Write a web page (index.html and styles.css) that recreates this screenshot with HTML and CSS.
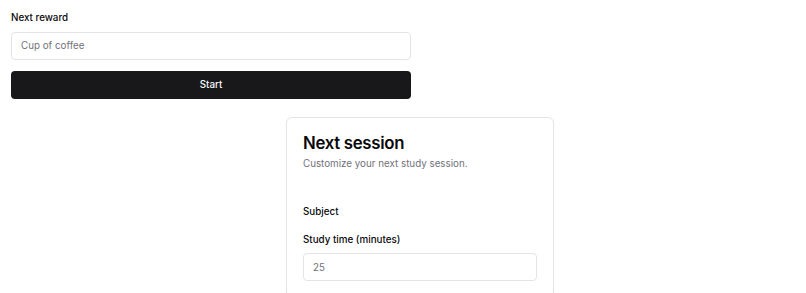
FILE: index.html
```html
<!DOCTYPE html>
<html lang="en">
<head>
  <meta charset="UTF-8">
  <title>Study rewards</title>
  <link rel="stylesheet" href="styles.css">
</head>
<body>
  <main class="page">
    <form class="reward-form">
      <label class="label" for="reward">Next reward</label>
      <input class="input" id="reward" type="text" placeholder="Cup of coffee">
      <button class="button" type="button">Start</button>
    </form>

    <section class="card">
      <div class="card-header">
        <h1 class="card-title">Next session</h1>
        <p class="card-description">Customize your next study session.</p>
      </div>
      <div class="card-content">
        <div class="field">
          <span class="label">Subject</span>
        </div>
        <div class="field">
          <label class="label" for="minutes">Study time (minutes)</label>
          <input class="input" id="minutes" type="number" placeholder="25">
        </div>
      </div>
    </section>
  </main>
</body>
</html>
```

FILE: styles.css
```css
* {
  margin: 0;
  padding: 0;
  box-sizing: border-box;
}

body {
  font-family: Inter, "Noto Sans", sans-serif;
  background-color: #fff;
  color: #09090b;
  overflow: hidden;
}

.page {
  padding: 13px 11px;
}

.reward-form {
  width: 400px;
  display: flex;
  flex-direction: column;
}

.label {
  display: block;
  font-size: 9.8px;
  font-weight: 500;
  line-height: 1;
  color: #09090b;
}

.input {
  display: block;
  width: 100%;
  height: 28px;
  margin-top: 9px;
  padding: 0 9px;
  border: 1px solid #e4e4e7;
  border-radius: 4px;
  background: #fff;
  font-family: inherit;
  font-size: 9.8px;
  color: #09090b;
  outline: none;
}

.input::placeholder {
  color: #71717a;
}

.button {
  height: 28px;
  margin-top: 11px;
  border: none;
  border-radius: 4px;
  background-color: #18181b;
  color: #fafafa;
  font-family: inherit;
  font-size: 9.8px;
  font-weight: 500;
}

.card {
  width: 268px;
  margin: 18px 0 0 275px;
  border: 1px solid #e4e4e7;
  border-radius: 6px;
  background: #fff;
  box-shadow: 0 1px 2px rgba(0, 0, 0, 0.04);
}

.card-header {
  padding: 17px 16px 0;
}

.card-title {
  font-size: 16.8px;
  font-weight: 600;
  line-height: 1;
  letter-spacing: -0.3px;
}

.card-description {
  margin-top: 6px;
  font-size: 9.8px;
  color: #71717a;
}

.card-content {
  padding: 38px 16px 16px;
}

.field + .field {
  margin-top: 19px;
}

.field .input {
  margin-top: 8px;
}
```
